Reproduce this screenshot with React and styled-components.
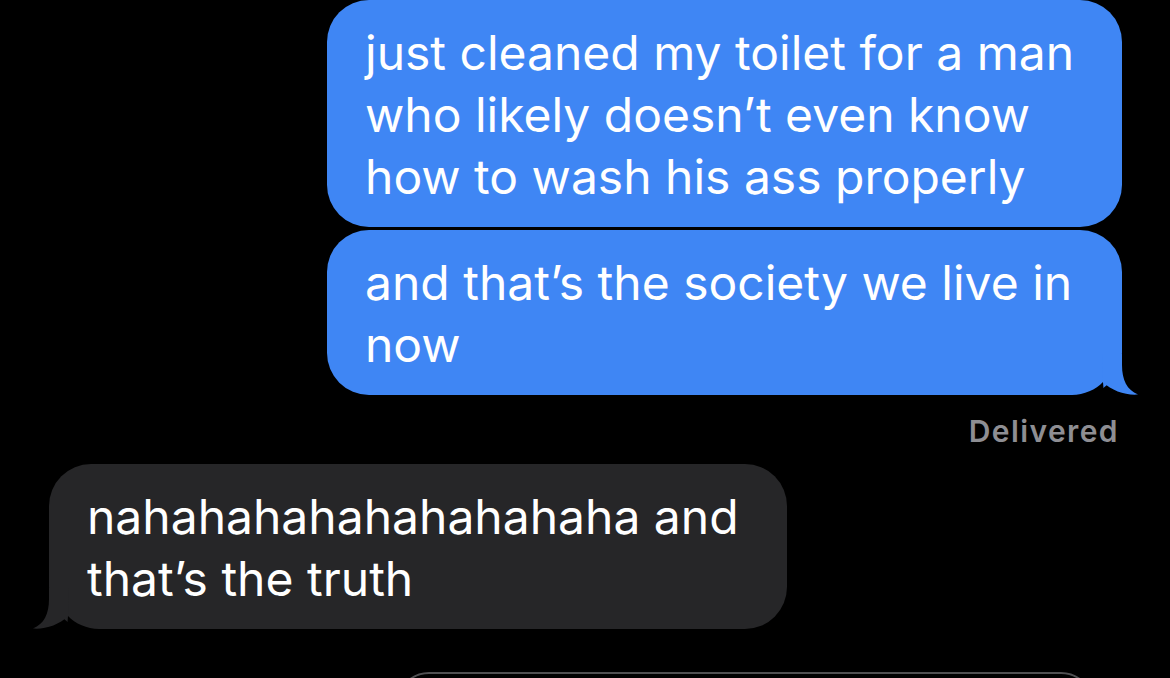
import React from 'react';
import styled, { createGlobalStyle } from 'styled-components';

const Global = createGlobalStyle`
    html, body {
        margin: 0;
        padding: 0;
        background: #000;
    }
`;

const Screen = styled.div`
    width: 1170px;
    height: 678px;
    overflow: hidden;

    display: flex;
    flex-direction: column;

    background: #000;
    font-family: Inter, "Noto Sans", sans-serif;

    & > * {
        flex-shrink: 0;
    }
`;

const Row = styled.div`
    display: flex;
    justify-content: ${props => props.$out ? 'flex-end' : 'flex-start'};

    padding: ${props => props.$out ? '0 48px 0 0' : '0 0 0 49px'};
    margin-top: ${props => props.$top || 0}px;
`;

const Bubble = styled.div`
    position: relative;
    box-sizing: border-box;
    width: ${props => props.$width}px;

    padding: 22px 20px 19px 38px;

    color: #fff;
    font-size: 48px;
    line-height: 62px;
    white-space: nowrap;

    background: ${props => props.$out ? '#3f86f4' : '#262628'};
    border-radius: 42px;
`;

const Tail = styled.svg`
    position: absolute;
    bottom: 0;
    ${props => props.$out ? 'right: -16px;' : 'left: -16px; transform: scaleX(-1);'}

    width: 66px;
    height: 41px;
    overflow: visible;
`;

const Status = styled.div`
    box-sizing: border-box;
    height: 69px;
    padding: 20px 51px 0 0;

    text-align: right;
    color: #8e8e93;
    font-size: 30px;
    font-weight: 600;
    line-height: 32px;
    letter-spacing: 1.4px;
`;

const Compose = styled.div`
    margin: 43px 0 0 396px;
    width: 694px;
    height: 62px;

    border: 2px solid #505052;
    border-radius: 34px;
`;

const BubbleTail = ({ out }) => (
    <Tail $out={out} viewBox="0 0 66 41">
        <path d="M0 41 C12 40.5 24 36 31 28 L32 41 Z" fill="#000" />
        <path
            d="M30 0 L50 0 L50 11 C50 26 55 36 66 40.5 C54 41.5 40 37 31 28 Z"
            fill={out ? '#3f86f4' : '#262628'}
        />
    </Tail>
);

const App = () => (
    <Screen>
        <Global />
        <Row $out>
            <Bubble $out $width={795}>
                just cleaned my toilet for a man<br />
                who likely doesn’t even know<br />
                how to wash his ass properly
            </Bubble>
        </Row>
        <Row $out $top={3}>
            <Bubble $out $width={795}>
                and that’s the society we live in<br />
                now
                <BubbleTail out />
            </Bubble>
        </Row>
        <Status>Delivered</Status>
        <Row>
            <Bubble $width={738}>
                nahahahahahahahahaha and<br />
                that’s the truth
                <BubbleTail />
            </Bubble>
        </Row>
        <Compose />
    </Screen>
);

export default App;
